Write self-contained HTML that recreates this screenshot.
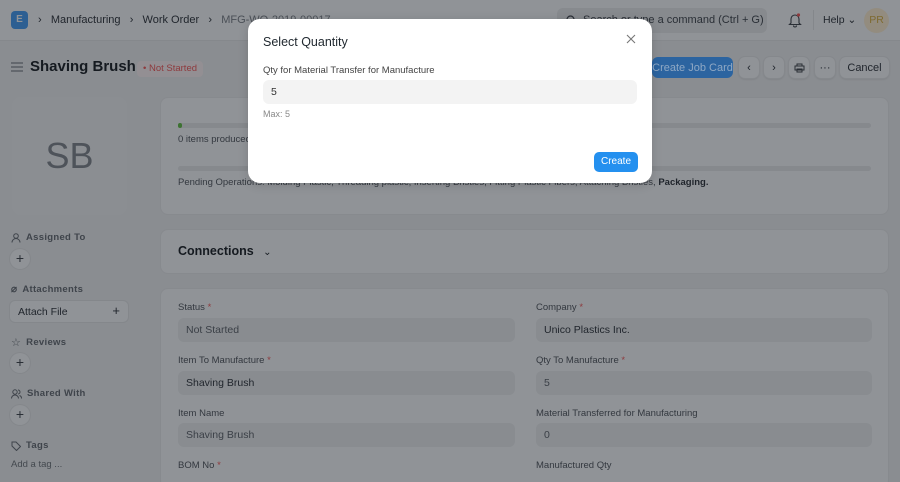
<!DOCTYPE html>
<html><head><meta charset="utf-8"><style>
*{box-sizing:border-box;margin:0;padding:0}
html,body{width:900px;height:482px;overflow:hidden}
body{background:#8a8d91;font-family:"Liberation Sans",sans-serif;color:#151a20;position:relative}
.abs{position:absolute}
.hdr{left:0;top:0;width:900px;height:41px;background:#909397;border-bottom:1px solid #85888c}
.crumb{font-size:11px;color:#1f242b;top:14px}
.btn{position:absolute;top:57px;height:21px;border-radius:6px;background:#909397;box-shadow:0 0 0 1px #85888c,0 1px 2px rgba(0,0,0,.15);font-size:11px;display:flex;align-items:center;justify-content:center;color:#1f242b}
.card{position:absolute;background:#909397;border:1px solid #878a8e;border-radius:8px}
.lbl{position:absolute;font-size:9.5px;color:#33383f}
.lbl b{color:#8e3a3d;font-weight:normal}
.inp{position:absolute;height:24px;background:#898c90;border-radius:6px;font-size:10.5px;padding:6px 8px;color:#1f242b}
.sl{position:absolute;left:11px;font-size:9.5px;color:#3f444b;font-weight:bold;letter-spacing:.3px;display:flex;align-items:center;gap:5px}
.plus{position:absolute;left:10px;width:20px;height:20px;border-radius:50%;background:#909397;box-shadow:0 0 0 1px #84878b;font-size:14px;line-height:19px;text-align:center;color:#2a2f36}
</style></head><body>
<div class="abs hdr"></div>
<div class="abs" style="left:11px;top:11px;width:17px;height:18px;background:#2d5f92;border-radius:4px;color:#909397;font-size:10px;font-weight:bold;text-align:center;line-height:18px">E</div>
<div class="abs crumb" style="left:38px">›&nbsp;&nbsp; Manufacturing &nbsp;&nbsp;›&nbsp;&nbsp; Work Order &nbsp;&nbsp;›&nbsp;&nbsp; <span style="color:#4a4f56">MFG-WO-2019-00017</span></div>
<div class="abs" style="left:557px;top:8px;width:210px;height:25px;background:#878a8e;border-radius:6px;font-size:11px;color:#2a2f36;padding:6px 0 0 26px">Search or type a command (Ctrl + G)
<svg class="abs" style="left:9px;top:7px" width="11" height="11" viewBox="0 0 11 11"><circle cx="4.5" cy="4.5" r="3.5" fill="none" stroke="#2a2f36" stroke-width="1.2"/><path d="M7 7l3 3" stroke="#2a2f36" stroke-width="1.2"/></svg></div>
<svg class="abs" style="left:788px;top:12px" width="14" height="16" viewBox="0 0 14 16"><path d="M3 11V7a4 4 0 0 1 8 0v4l1.5 1.5h-11z M5.5 13.5a1.5 1.5 0 0 0 3 0" fill="none" stroke="#2a2f36" stroke-width="1.1"/><circle cx="10.5" cy="3" r="1.6" fill="#8e3a3d"/></svg>
<div class="abs" style="left:813px;top:10px;width:1px;height:20px;background:#84878b"></div>
<div class="abs" style="left:823px;top:14px;font-size:10.5px;color:#1f242b">Help ⌄</div>
<div class="abs" style="left:864px;top:8px;width:25px;height:25px;border-radius:50%;background:#938c7f;color:#7e6a30;font-size:10.5px;text-align:center;line-height:25px">PR</div>

<svg class="abs" style="left:11px;top:62px" width="12" height="10" viewBox="0 0 12 10"><path d="M0 1h12M0 5h12M0 9h12" stroke="#3f444b" stroke-width="1.1"/></svg>
<div class="abs" style="left:30px;top:58px;font-size:15px;font-weight:bold">Shaving Brush</div>
<div class="abs" style="left:137px;top:61px;height:16px;padding:2px 6px;background:#938f93;border-radius:4px;font-size:9.5px;color:#8e3a3d">• Not Started</div>
<div class="btn" style="left:652px;width:81px;background:#2c64a0;color:#8fa8c4;box-shadow:none">Create Job Card</div>
<div class="btn" style="left:739px;width:20px">‹</div>
<div class="btn" style="left:764px;width:20px">›</div>
<div class="btn" style="left:789px;width:20px"><svg width="11" height="10" viewBox="0 0 11 10"><path d="M3 3V1h5v2M1 3h9v4H1zM3 6h5v3H3z" fill="#909397" stroke="#2a2f36" stroke-width="1"/></svg></div>
<div class="btn" style="left:815px;width:20px">···</div>
<div class="btn" style="left:840px;width:49px">Cancel</div>

<div class="abs" style="left:12px;top:97px;width:115px;height:118px;background:#8b8e92;border-radius:8px;font-size:36px;color:#4e535a;text-align:center;line-height:118px">SB</div>

<div class="card" style="left:160px;top:97px;width:729px;height:118px"></div>
<div class="abs" style="left:178px;top:123px;width:693px;height:5px;background:#86898d;border-radius:3px"><div style="width:4px;height:5px;background:#3d7232;border-radius:3px"></div></div>
<div class="abs" style="left:178px;top:134px;font-size:9.5px;color:#33383f">0 items produced</div>
<div class="abs" style="left:178px;top:166px;width:693px;height:5px;background:#86898d;border-radius:3px"></div>
<div class="abs" style="left:178px;top:177px;font-size:9.5px;color:#33383f">Pending Operations: Molding Plastic, Threading plastic, Inserting Bristles, Fitting Plastic Fibers, Attaching Bristles, <b style="color:#1f242b">Packaging.</b></div>

<div class="card" style="left:160px;top:229px;width:729px;height:45px"></div>
<div class="abs" style="left:178px;top:244px;font-size:12.5px;font-weight:bold">Connections <span style="font-weight:normal;font-size:10px;margin-left:6px">⌄</span></div>

<div class="card" style="left:160px;top:288px;width:729px;height:200px"></div>
<div class="lbl" style="left:178px;top:302px">Status <b>*</b></div>
<div class="inp" style="left:178px;top:318px;width:337px;color:#3a3f46">Not Started</div>
<div class="lbl" style="left:178px;top:355px">Item To Manufacture <b>*</b></div>
<div class="inp" style="left:178px;top:371px;width:337px">Shaving Brush</div>
<div class="lbl" style="left:178px;top:408px">Item Name</div>
<div class="inp" style="left:178px;top:423px;width:337px;color:#3a3f46">Shaving Brush</div>
<div class="lbl" style="left:178px;top:460px">BOM No <b>*</b></div>
<div class="lbl" style="left:536px;top:302px">Company <b>*</b></div>
<div class="inp" style="left:536px;top:318px;width:336px">Unico Plastics Inc.</div>
<div class="lbl" style="left:536px;top:355px">Qty To Manufacture <b>*</b></div>
<div class="inp" style="left:536px;top:371px;width:336px;color:#3a3f46">5</div>
<div class="lbl" style="left:536px;top:408px">Material Transferred for Manufacturing</div>
<div class="inp" style="left:536px;top:423px;width:336px;color:#3a3f46">0</div>
<div class="lbl" style="left:536px;top:460px">Manufactured Qty</div>

<div class="sl" style="top:232px"><svg width="10" height="10" viewBox="0 0 10 10"><circle cx="5" cy="3" r="2.3" fill="none" stroke="#3f444b"/><path d="M1 9.5a4 4 0 0 1 8 0" fill="none" stroke="#3f444b"/></svg>Assigned To</div>
<div class="plus" style="top:249px">+</div>
<div class="sl" style="top:284px"><span style="font-size:10px">⌀</span>Attachments</div>
<div class="abs" style="left:10px;top:301px;width:118px;height:21px;background:#909397;border-radius:5px;box-shadow:0 0 0 1px #84878b;font-size:10.5px;padding:5px 8px;color:#1f242b">Attach File<span style="float:right;font-size:13px;line-height:10px">+</span></div>
<div class="sl" style="top:336px"><span style="font-size:11px;font-weight:normal">☆</span>Reviews</div>
<div class="plus" style="top:353px">+</div>
<div class="sl" style="top:388px"><svg width="11" height="10" viewBox="0 0 11 10"><circle cx="4" cy="3" r="2.2" fill="none" stroke="#3f444b"/><path d="M0.5 9.5a3.5 3.5 0 0 1 7 0M7 1a2 2 0 0 1 0 4M8.5 6.5a3 3 0 0 1 2 3" fill="none" stroke="#3f444b"/></svg>Shared With</div>
<div class="plus" style="top:405px">+</div>
<div class="sl" style="top:440px"><svg width="10" height="10" viewBox="0 0 10 10"><path d="M1 1h4l4.5 4.5-4 4L1 5z" fill="none" stroke="#3f444b"/></svg>Tags</div>
<div class="abs" style="left:11px;top:459px;font-size:9.5px;color:#44494f">Add a tag ...</div>

<div class="abs" style="left:248px;top:19px;width:404px;height:164px;background:#fff;border-radius:12px;box-shadow:0 2px 10px rgba(0,0,0,.15)">
 <div class="abs" style="left:15px;top:16px;font-size:12.5px;font-weight:500;color:#1f272e">Select Quantity</div>
 <svg class="abs" style="left:378px;top:15px" width="10" height="10" viewBox="0 0 10 10"><path d="M1 1l8 8M9 1l-8 8" stroke="#777" stroke-width="1.1"/></svg>
 <div class="abs" style="left:15px;top:46px;font-size:9.5px;color:#444">Qty for Material Transfer for Manufacture</div>
 <div class="abs" style="left:15px;top:61px;width:374px;height:24px;background:#f3f3f3;border-radius:6px;font-size:10.5px;padding:6px 8px;color:#333">5</div>
 <div class="abs" style="left:15px;top:90px;font-size:9px;color:#888">Max: 5</div>
 <div class="abs" style="left:346px;top:133px;width:44px;height:20px;background:#2490ef;border-radius:5px;color:#fff;font-size:10px;text-align:center;line-height:20px">Create</div>
</div>
</body></html>
